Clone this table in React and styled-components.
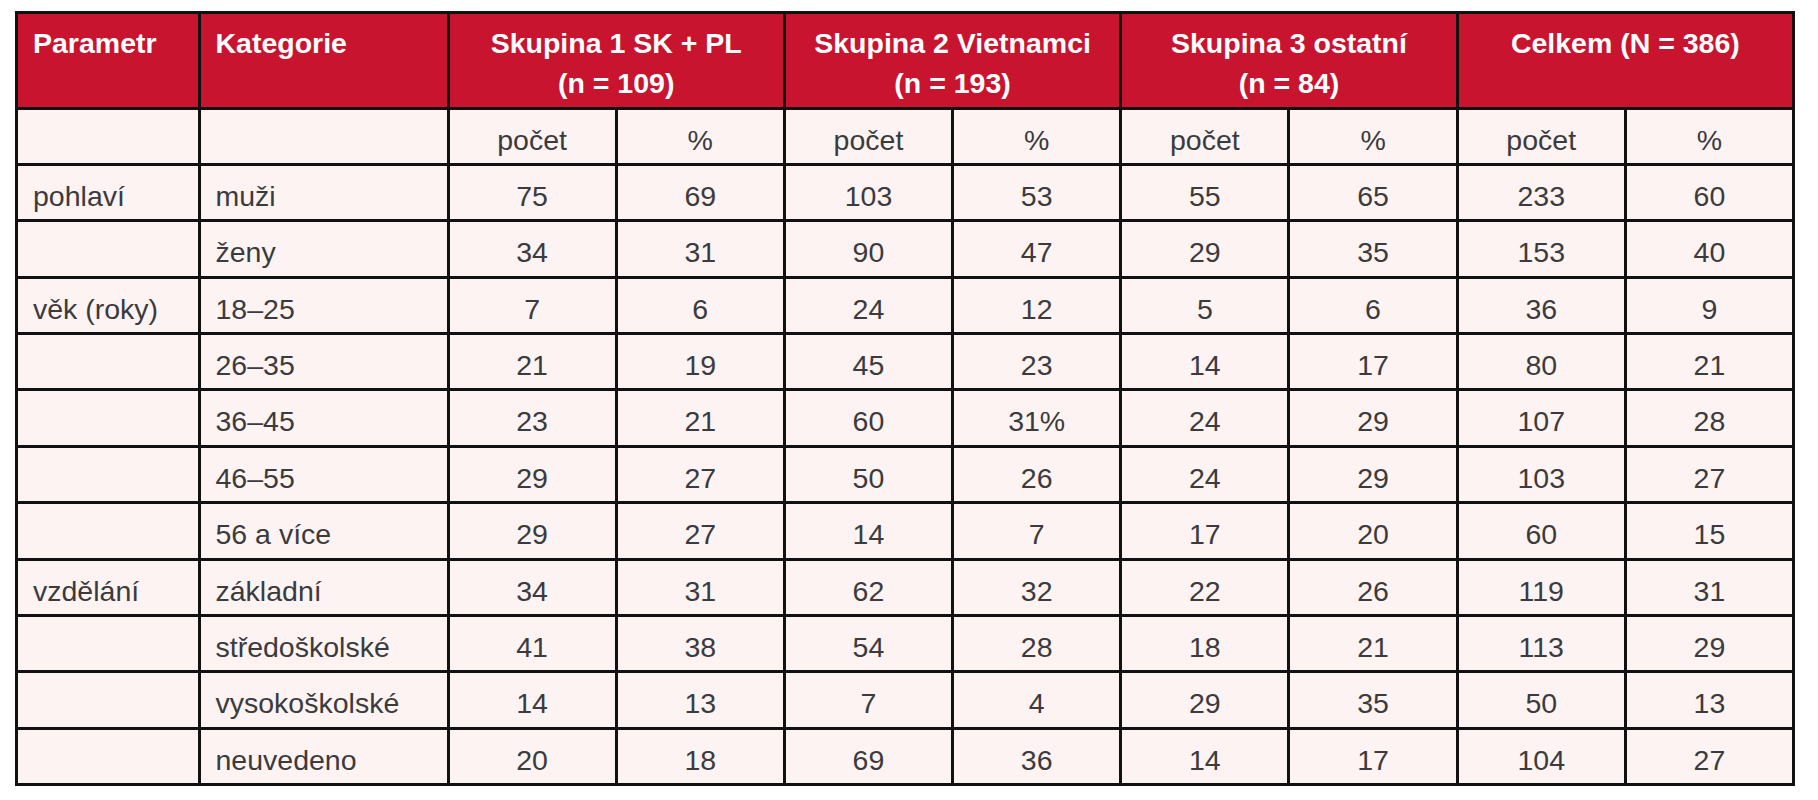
import React from 'react';
import styled, { createGlobalStyle } from 'styled-components';

const GlobalStyle = createGlobalStyle`
  html, body {
    margin: 0;
    padding: 0;
    background: #ffffff;
  }
  body {
    font-family: "Liberation Sans", Arial, sans-serif;
  }
`;

const Page = styled.div`
  padding: 11px 0 0 15px;
  width: 1818px;
  height: 800px;
  box-sizing: border-box;
  overflow: hidden;
`;

const Table = styled.table`
  border-collapse: collapse;
  table-layout: fixed;
  width: 1780px;
  border: 3px solid #111;
  font-family: "Liberation Sans", Arial, sans-serif;
`;

const HeadRow = styled.tr`
  height: 95.5px;
`;

const BodyRow = styled.tr`
  height: 56.4px;
`;

const HeadCell = styled.th`
  background: #c8142f;
  color: #ffffff;
  border: 3px solid #111;
  font-size: 28.5px;
  font-weight: 700;
  line-height: 40px;
  text-align: ${(p) => (p.$left ? 'left' : 'center')};
  vertical-align: top;
  padding: 9px ${(p) => (p.$left ? '8px' : '4px')} 0 ${(p) => (p.$left ? '15px' : '4px')};
  white-space: nowrap;
`;

const Cell = styled.td`
  background: #fdf3f3;
  color: #3b3b3d;
  border: 3px solid #111;
  font-size: 28.5px;
  line-height: 1;
  text-align: ${(p) => (p.$left ? 'left' : 'center')};
  vertical-align: top;
  padding: 16px 4px 0 ${(p) => (p.$left ? '15px' : '4px')};
  white-space: nowrap;
`;

const groups = [
  ['Skupina 1 SK + PL', '(n = 109)'],
  ['Skupina 2 Vietnamci', '(n = 193)'],
  ['Skupina 3 ostatní', '(n = 84)'],
  ['Celkem (N = 386)'],
];

const rows = [
  ['pohlaví', 'muži', 75, 69, 103, 53, 55, 65, 233, 60],
  ['', 'ženy', 34, 31, 90, 47, 29, 35, 153, 40],
  ['věk (roky)', '18–25', 7, 6, 24, 12, 5, 6, 36, 9],
  ['', '26–35', 21, 19, 45, 23, 14, 17, 80, 21],
  ['', '36–45', 23, 21, 60, '31%', 24, 29, 107, 28],
  ['', '46–55', 29, 27, 50, 26, 24, 29, 103, 27],
  ['', '56 a více', 29, 27, 14, 7, 17, 20, 60, 15],
  ['vzdělání', 'základní', 34, 31, 62, 32, 22, 26, 119, 31],
  ['', 'středoškolské', 41, 38, 54, 28, 18, 21, 113, 29],
  ['', 'vysokoškolské', 14, 13, 7, 4, 29, 35, 50, 13],
  ['', 'neuvedeno', 20, 18, 69, 36, 14, 17, 104, 27],
];

const colWidths = [182.5, 249, 168.2, 168.2, 168.2, 168.2, 168.2, 168.2, 168.2, 168.2];

export default function App() {
  return (
    <Page>
      <GlobalStyle />
      <Table>
        <colgroup>
          {colWidths.map((w, i) => (
            <col key={i} style={{ width: w }} />
          ))}
        </colgroup>
        <thead>
          <HeadRow>
            <HeadCell $left>Parametr</HeadCell>
            <HeadCell $left>Kategorie</HeadCell>
            {groups.map((g, i) => (
              <HeadCell key={i} colSpan={2}>
                {g[0]}
                {g[1] && (
                  <>
                    <br />
                    {g[1]}
                  </>
                )}
              </HeadCell>
            ))}
          </HeadRow>
        </thead>
        <tbody>
          <BodyRow>
            <Cell $left />
            <Cell $left />
            {groups.map((_, i) => (
              <React.Fragment key={i}>
                <Cell>počet</Cell>
                <Cell>%</Cell>
              </React.Fragment>
            ))}
          </BodyRow>
          {rows.map((r, i) => (
            <BodyRow key={i}>
              {r.map((v, j) => (
                <Cell key={j} $left={j < 2}>
                  {v}
                </Cell>
              ))}
            </BodyRow>
          ))}
        </tbody>
      </Table>
    </Page>
  );
}
